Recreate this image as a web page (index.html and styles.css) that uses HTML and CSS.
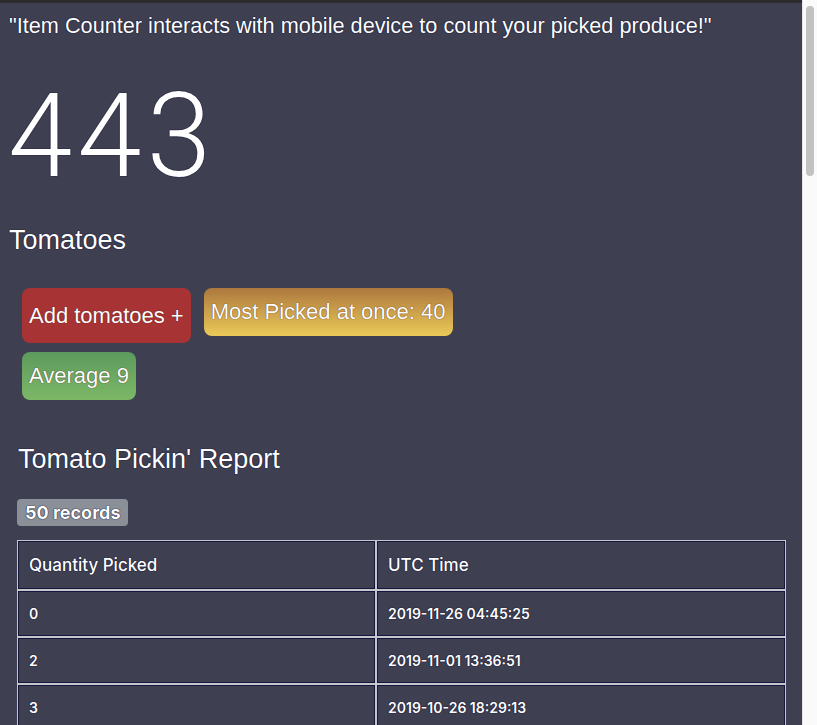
FILE: index.html
```html
<!DOCTYPE html>
<html lang="en">
<head>
<meta charset="utf-8">
<title>Item Counter</title>
<link rel="stylesheet" href="styles.css">
</head>
<body>
<div class="topbar"></div>
<main class="page">
  <p class="tagline">"Item Counter interacts with mobile device to count your picked produce!"</p>
  <div class="count">443</div>
  <h2 class="produce">Tomatoes</h2>
  <div class="actions">
    <button class="btn btn-add">Add tomatoes +</button>
    <div class="stat stat-max">Most Picked at once: 40</div>
    <div class="stat stat-avg">Average 9</div>
  </div>
  <section class="report">
    <h3 class="report-title">Tomato Pickin' Report</h3>
    <span class="badge">50 records</span>
    <table class="records">
      <thead>
        <tr><th class="col-qty">Quantity Picked</th><th>UTC Time</th></tr>
      </thead>
      <tbody>
        <tr><td>0</td><td>2019-11-26 04:45:25</td></tr>
        <tr><td>2</td><td>2019-11-01 13:36:51</td></tr>
        <tr><td>3</td><td>2019-10-26 18:29:13</td></tr>
      </tbody>
    </table>
  </section>
</main>
<div class="scrollbar"><div class="thumb"></div></div>
</body>
</html>
```
FILE: styles.css
```css
html, body {
  margin: 0;
  padding: 0;
  background: #3e3f51;
}
body {
  font-family: "Liberation Sans", Arial, sans-serif;
  color: #ffffff;
}
.topbar {
  height: 3px;
  background: #2c2c30;
}
.page {
  min-height: 2950px;
  width: 793px;
  padding: 0 0 0 9px;
  border-right: 1px solid #14163a;
  text-shadow: 0 0 1px #0b0b2e, 0 0 1px #0b0b2e;
}
.tagline {
  margin: 0;
  padding-top: 10px;
  font-size: 21.7px;
  line-height: 26px;
}
.count {
  margin-top: 27px;
  font-family: Roboto, "Liberation Sans", sans-serif;
  font-weight: 300;
  font-size: 116px;
  line-height: 140px;
  letter-spacing: 5px;
  margin-left: -1px;
}
.produce {
  margin: 18px 0 0 0;
  font-weight: normal;
  font-size: 27px;
  line-height: 32px;
}
.actions {
  display: flex;
  flex-wrap: wrap;
  align-items: flex-start;
  gap: 9px 13px;
  padding: 32px 0 0 13px;
  width: 470px;
}
.btn, .stat {
  font-family: "Liberation Sans", Arial, sans-serif;
  font-size: 22px;
  color: #fff;
  border-radius: 8px;
  padding: 0 7px;
  text-shadow: 0 0 1px #3a0b0b;
}
.btn {
  border: 0;
  height: 55px;
  background: #a83334;
  cursor: pointer;
}
.stat {
  height: 48px;
  line-height: 48px;
}
.stat-max {
  background: linear-gradient(#ad783e, #ebca58);
}
.stat-avg {
  background: linear-gradient(#5d9a5e, #7cb866);
}
.report {
  padding: 42px 0 0 8px;
  width: 769px;
}
.report-title {
  margin: 0 0 0 1px;
  font-weight: normal;
  font-size: 27px;
  line-height: 34px;
}
.badge {
  display: block;
  width: fit-content;
  margin-top: 23px;
  padding: 0 8px;
  height: 27px;
  line-height: 27px;
  background: #8b8f98;
  border-radius: 4px;
  font-family: Inter, "Liberation Sans", sans-serif;
  font-weight: 700;
  font-size: 18px;
}
.records {
  margin-top: 14px;
  width: 769px;
  border-collapse: separate;
  border-spacing: 0;
}
.records th, .records td {
  text-align: left;
  border: 1px solid #c6c6ce;
  box-shadow: inset 0 0 0 1px #14163a;
  padding: 0 11px;
}
.records .col-qty {
  width: 335px;
}
.records th {
  height: 48px;
  font-family: Inter, "Liberation Sans", sans-serif;
  font-weight: 500;
  font-size: 17px;
}
.records td {
  height: 45px;
  font-family: Inter, "Liberation Sans", sans-serif;
  font-weight: 600;
  font-size: 14px;
  vertical-align: middle;
}
.scrollbar {
  position: fixed;
  top: 0;
  right: 0;
  width: 14px;
  height: 100%;
  background: #fafafa;
  border-left: 1px solid #e6e6e6;
}
.thumb {
  margin: 6px 0 0 3px;
  width: 8px;
  height: 170px;
  border-radius: 4px;
  background: #c2c2c2;
}
```
